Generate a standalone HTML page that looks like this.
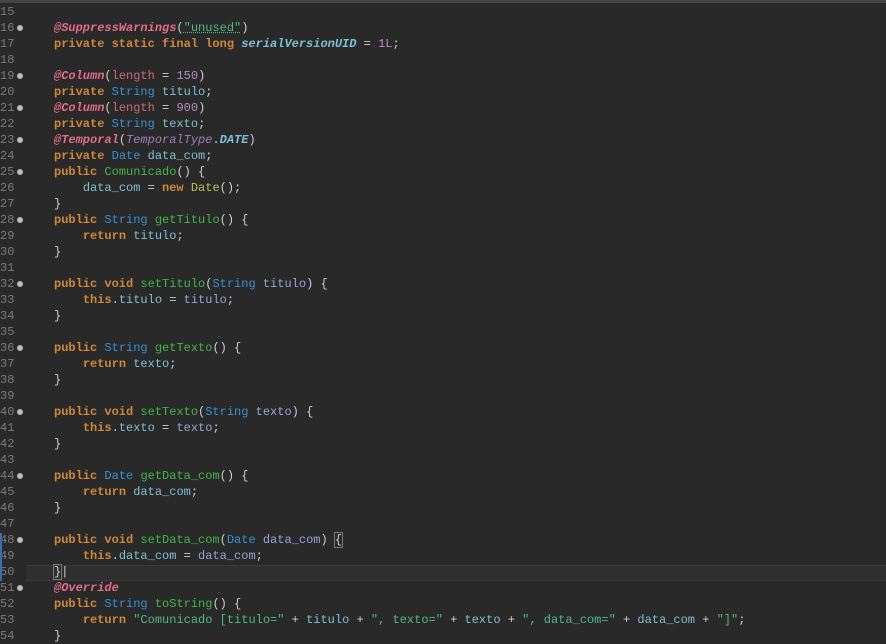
<!DOCTYPE html>
<html><head><meta charset="utf-8"><style>
html,body{margin:0;padding:0;background:#292929;width:886px;height:633px;overflow:hidden}
.top{position:absolute;left:0;top:0;width:886px;height:3px;background:#444}
.ln{position:absolute;left:0;width:24px;font:12px "Liberation Mono",monospace;color:#7a7a7a;line-height:16px}
.dot{position:absolute;left:17px;width:6px;height:6px;border-radius:50%;background:#bbb}
.code{position:absolute;left:54px;font:12px/16px "Liberation Mono",monospace;color:#cfcfcf;white-space:pre}
.k{color:#cf873b;font-weight:bold}
.t{color:#3b8fcf}
.m{color:#43b548}
.f{color:#7fc0d2}
.p{color:#98a4d8}
.a{color:#e26d8b;font-style:italic;font-weight:bold}
.s{color:#50b88c}
.n{color:#b48fc0}
.y{color:#b8c35a}
.i{color:#a27fbf;font-style:italic}
.c{color:#7fc0d2;font-style:italic;font-weight:bold}
.hl{position:absolute;left:26px;top:565px;width:860px;height:16px;background:#2f2f2f;border-top:1px solid #3a3a3a;border-bottom:1px solid #3a3a3a;box-sizing:border-box}
</style></head><body>
<div class="top"></div>
<div class="hl"></div>
<div id="nums"></div>
<div class="ln" style="top:4px">15<br>16<br>17<br>18<br>19<br>20<br>21<br>22<br>23<br>24<br>25<br>26<br>27<br>28<br>29<br>30<br>31<br>32<br>33<br>34<br>35<br>36<br>37<br>38<br>39<br>40<br>41<br>42<br>43<br>44<br>45<br>46<br>47<br>48<br>49<br>50<br>51<br>52<br>53<br>54</div>
<div class="dot" style="top:25px"></div>
<div class="dot" style="top:73px"></div>
<div class="dot" style="top:105px"></div>
<div class="dot" style="top:137px"></div>
<div class="dot" style="top:169px"></div>
<div class="dot" style="top:217px"></div>
<div class="dot" style="top:281px"></div>
<div class="dot" style="top:345px"></div>
<div class="dot" style="top:409px"></div>
<div class="dot" style="top:473px"></div>
<div class="dot" style="top:537px"></div>
<div class="dot" style="top:585px"></div>
<div style="position:absolute;left:0;top:533px;width:2px;height:48px;background:#3b6ea8"></div>
<div class="code" style="top:4px">
<span class="a">@SuppressWarnings</span>(<span class="s" style="text-decoration:underline dotted">"unused"</span>)
<span class="k">private static final long</span> <span class="c">serialVersionUID</span> = <span class="n">1L</span>;

<span class="a">@Column</span>(<span class="i" style="color:#c86a7a;font-style:normal">length</span> = <span class="n">150</span>)
<span class="k">private</span> <span class="t">String</span> <span class="f">titulo</span>;
<span class="a">@Column</span>(<span class="i" style="color:#c86a7a;font-style:normal">length</span> = <span class="n">900</span>)
<span class="k">private</span> <span class="t">String</span> <span class="f">texto</span>;
<span class="a">@Temporal</span>(<span class="i">TemporalType</span>.<span class="c">DATE</span>)
<span class="k">private</span> <span class="t">Date</span> <span class="f">data_com</span>;
<span class="k">public</span> <span class="m">Comunicado</span>() {
    <span class="f">data_com</span> = <span class="k">new</span> <span class="y">Date</span>();
}
<span class="k">public</span> <span class="t">String</span> <span class="m">getTitulo</span>() {
    <span class="k">return</span> <span class="f">titulo</span>;
}

<span class="k">public void</span> <span class="m">setTitulo</span>(<span class="t">String</span> <span class="p">titulo</span>) {
    <span class="k">this</span>.<span class="f">titulo</span> = <span class="p">titulo</span>;
}

<span class="k">public</span> <span class="t">String</span> <span class="m">getTexto</span>() {
    <span class="k">return</span> <span class="f">texto</span>;
}

<span class="k">public void</span> <span class="m">setTexto</span>(<span class="t">String</span> <span class="p">texto</span>) {
    <span class="k">this</span>.<span class="f">texto</span> = <span class="p">texto</span>;
}

<span class="k">public</span> <span class="t">Date</span> <span class="m">getData_com</span>() {
    <span class="k">return</span> <span class="f">data_com</span>;
}

<span class="k">public void</span> <span class="m">setData_com</span>(<span class="t">Date</span> <span class="p">data_com</span>) <span style="outline:1px solid #777">{</span>
    <span class="k">this</span>.<span class="f">data_com</span> = <span class="p">data_com</span>;
<span style="outline:1px solid #777">}</span>|
<span class="a">@Override</span>
<span class="k">public</span> <span class="t">String</span> <span class="m">toString</span>() {
    <span class="k">return</span> <span class="s">"Comunicado [titulo="</span> + <span class="f">titulo</span> + <span class="s">", texto="</span> + <span class="f">texto</span> + <span class="s">", data_com="</span> + <span class="f">data_com</span> + <span class="s">"]"</span>;
}
</div>
</body></html>
